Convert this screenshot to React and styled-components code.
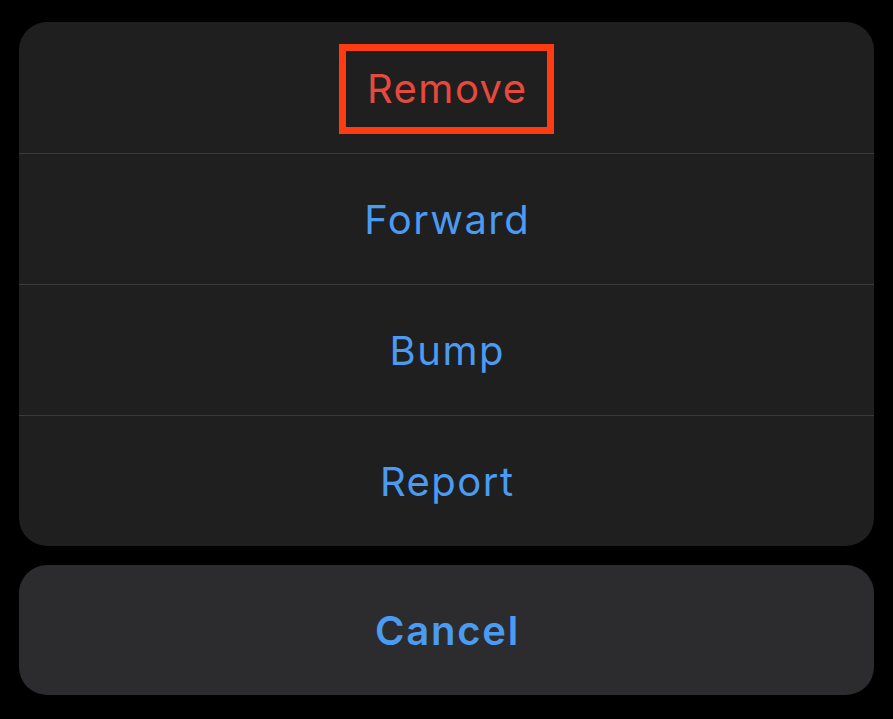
import React from "react";
import styled, { createGlobalStyle } from "styled-components";

const GlobalStyle = createGlobalStyle`
  html, body {
    margin: 0;
    padding: 0;
    background: #000;
  }
  body {
    font-family: Inter, "Liberation Sans", sans-serif;
  }
`;

const actions = [
  { label: "Remove", destructive: true, highlighted: true },
  { label: "Forward" },
  { label: "Bump" },
  { label: "Report" },
];

export default function App() {
  return (
    <>
      <GlobalStyle />
      <Screen>
        <ActionGroup>
          {actions.map((itm) => (
            <ActionRow key={itm.label}>
              {itm.highlighted ? (
                <Highlight>
                  <ActionLabel $destructive={itm.destructive}>
                    {itm.label}
                  </ActionLabel>
                </Highlight>
              ) : (
                <ActionLabel $destructive={itm.destructive}>
                  {itm.label}
                </ActionLabel>
              )}
            </ActionRow>
          ))}
        </ActionGroup>
        <CancelButton>Cancel</CancelButton>
      </Screen>
    </>
  );
}

const Screen = styled.div`
  width: 893px;
  height: 719px;
  box-sizing: border-box;
  padding: 22px 19px 0;
  display: flex;
  flex-direction: column;
  gap: 19px;
  background: #000;
`;

const ActionGroup = styled.div`
  display: flex;
  flex-direction: column;
  background: #1f1f1f;
  border-radius: 28px;
  overflow: hidden;
`;

const ActionRow = styled.div`
  height: 131px;
  box-sizing: border-box;
  display: flex;
  align-items: center;
  justify-content: center;
  flex-shrink: 0;
  & + & {
    border-top: 1px solid #3a3a3c;
  }
`;

const Highlight = styled.div`
  width: 215px;
  height: 90px;
  box-sizing: border-box;
  border: 7px solid #ff3b14;
  display: flex;
  align-items: center;
  justify-content: center;
  margin-top: 2px;
`;

const ActionLabel = styled.span`
  font-size: 40px;
  font-weight: 400;
  color: ${(p) => (p.$destructive ? "#e6493e" : "#4b9bf2")};
  letter-spacing: 1.5px;
  margin-right: -1.5px;
`;

const CancelButton = styled.button`
  height: 130px;
  flex-shrink: 0;
  border: none;
  border-radius: 28px;
  background: #2c2c2e;
  color: #4b9bf2;
  font-family: Inter, "Liberation Sans", sans-serif;
  font-size: 40px;
  font-weight: 600;
  letter-spacing: 1.8px;
  padding: 0 0 0 2px;
`;
